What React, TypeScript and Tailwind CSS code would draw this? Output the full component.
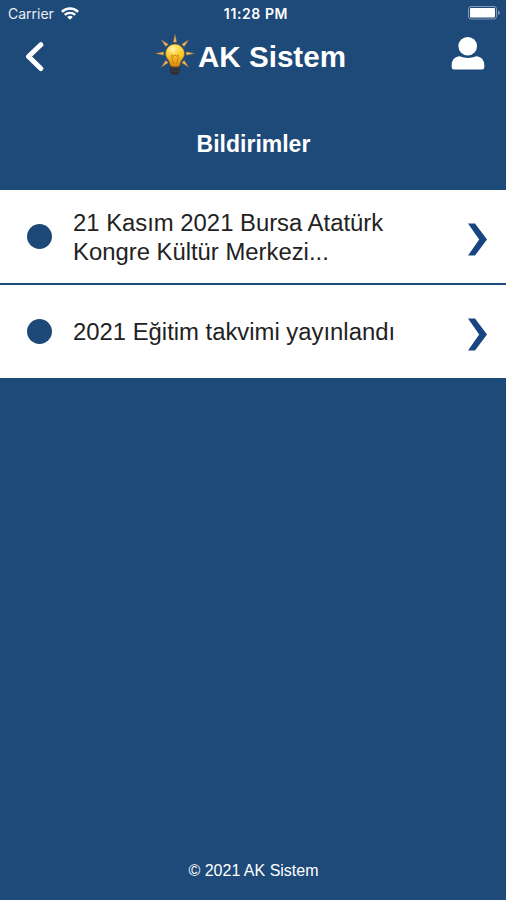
interface Notification {
  id: number;
  lines: string[];
}

const NOTIFICATIONS: Notification[] = [
  { id: 1, lines: ["21 Kasım 2021 Bursa Atatürk", "Kongre Kültür Merkezi..."] },
  { id: 2, lines: ["2021 Eğitim takvimi yayınlandı"] },
];

// every 45° except straight down, where the socket sits
const RAY_ANGLES = [-90, -45, 0, 45, 135, 180, -135];

function WifiIcon() {
  return (
    <svg width="18" height="13" viewBox="0 0 18 13" fill="none" stroke="#fff" strokeWidth="2.4">
      <path d="M0.9 4.8C5.4 0.3 12.6 0.3 17.1 4.8" />
      <path d="M3.7 7.9C6.7 5.2 11.3 5.2 14.3 7.9" />
      <path d="M6.2 9.9C7.8 8.5 10.2 8.5 11.8 9.9L9 12.8Z" fill="#fff" stroke="none" />
    </svg>
  );
}

function BatteryIcon() {
  return (
    <svg width="33" height="14" viewBox="0 0 33 14">
      <rect x="0.5" y="0.5" width="28" height="12.5" rx="2.5" fill="none" stroke="#fff" strokeOpacity="0.45" />
      <rect x="2" y="2" width="25" height="9.5" rx="1" fill="#fff" />
      <path d="M30 4.5v4.5c2.4-0.8 2.4-3.7 0-4.5Z" fill="#fff" fillOpacity="0.45" />
    </svg>
  );
}

function BulbLogo() {
  return (
    <svg width="40" height="42" viewBox="0 0 40 42">
      <defs>
        <linearGradient id="glass" x1="0" y1="0" x2="0" y2="1">
          <stop offset="0" stopColor="#ffe04f" />
          <stop offset="0.5" stopColor="#fcc52c" />
          <stop offset="1" stopColor="#d9810a" />
        </linearGradient>
        <radialGradient id="shine" cx="0.4" cy="0.35" r="0.5">
          <stop offset="0" stopColor="#fff8b8" />
          <stop offset="1" stopColor="#ffe36a" stopOpacity="0" />
        </radialGradient>
      </defs>
      {RAY_ANGLES.map((a) => (
        <path
          key={a}
          d="M31.2 17.7L31.2 21.3L39.7 19.5Z"
          fill="#efb55a"
          stroke="#6b5a44"
          strokeWidth="0.4"
          transform={`rotate(${a} 20 19.5)`}
        />
      ))}
      <path d="M15 31h10v6.5c0 1.5-2 3.5-5 3.5s-5-2-5-3.5Z" fill="#302f35" />
      <path d="M15.5 34h9M16 37h8" stroke="#45464e" strokeWidth="0.8" />
      <path
        d="M20 10.1a9.5 9.5 0 0 0-9.5 9.5c0 4.2 3.3 6 4.1 9.1l0.9 3.3c1.8 1.2 7.2 1.2 9 0l0.9-3.3c0.8-3.1 4.1-4.9 4.1-9.1A9.5 9.5 0 0 0 20 10.1Z"
        fill="url(#glass)"
        stroke="#7d5c20"
        strokeWidth="0.6"
      />
      <ellipse cx="19.5" cy="17.5" rx="8" ry="7" fill="url(#shine)" />
      <path d="M18.5 30L16.4 21.2l1.9 0.9 1.7-0.9 1.7 0.9 1.9-0.9L21.5 30" fill="none" stroke="#b97a18" strokeWidth="0.8" />
    </svg>
  );
}

function StatusBar() {
  return (
    <div className="relative flex h-[26px] items-center justify-between pr-[5px] pl-2 font-['Inter',sans-serif]">
      <div className="flex items-center gap-[7px]">
        <span className="pt-px text-[14px] text-[#e9eef5]">Carrier</span>
        <WifiIcon />
      </div>
      <span className="absolute inset-x-0 pt-px pl-[6px] text-center text-[14px] font-semibold tracking-[0.6px]">11:28 PM</span>
      <BatteryIcon />
    </div>
  );
}

function Header() {
  return (
    <header className="flex h-[64px] items-start justify-between pr-[21px] pl-[25px]">
      <svg className="mt-[15px]" width="20" height="31" viewBox="0 0 20 31" fill="none">
        <path d="M15.8 3.7L3.5 15.5L15.8 27.5" stroke="#fff" strokeWidth="5" strokeLinecap="round" strokeLinejoin="round" />
      </svg>
      <div className="ml-[5px] flex items-center gap-[3px] pt-[8px]">
        <BulbLogo />
        <h1 className="pt-[4px] text-[29.6px] leading-[38px] font-bold">AK Sistem</h1>
      </div>
      <svg className="mt-[10px]" width="34" height="34" viewBox="0 0 34 34" fill="#fff">
        <circle cx="16.7" cy="10.2" r="9.3" />
        <path d="M9 20.3c4.8 2.2 11.2 2.2 16 0c5 0 8.3 3.8 8.3 8.5v2.2a2.5 2.5 0 0 1-2.5 2.5H3.2a2.5 2.5 0 0 1-2.5-2.5v-2.2c0-4.7 3.3-8.5 8.3-8.5Z" />
      </svg>
    </header>
  );
}

function NotificationRow({ lines }: { lines: string[] }) {
  return (
    <li className="flex h-[93px] items-center bg-white pr-[18px] pl-[27px]">
      <span className="size-[25px] shrink-0 rounded-full bg-[#1d4978]" />
      <p className="ml-[21px] flex-1 text-[23.85px] leading-[29px] whitespace-nowrap text-[#222]">
        {lines.map((line) => (
          <span key={line} className="block">{line}</span>
        ))}
      </p>
      <svg className="mt-[5px] shrink-0" width="20" height="33" viewBox="0 0 20 33" fill="#174580">
        <path d="M0 0.5H7L19 16.5L7 32.5H0L11.2 16.5Z" />
      </svg>
    </li>
  );
}

export default function App() {
  return (
    <div className="flex h-[900px] w-[506px] flex-col overflow-hidden bg-[#1e4a79] font-['Liberation_Sans',Arial,sans-serif] text-white">
      <StatusBar />
      <Header />
      <h2 className="flex h-[100px] items-center justify-center pt-[8px] pl-px text-[23px] font-bold">Bildirimler</h2>
      <ul className="flex flex-col gap-[2px]">
        {NOTIFICATIONS.map((n) => (
          <NotificationRow key={n.id} lines={n.lines} />
        ))}
      </ul>
      <footer className="mt-auto pb-[17px] pl-px text-center text-[16px] leading-[24px]">© 2021 AK Sistem</footer>
    </div>
  );
}
